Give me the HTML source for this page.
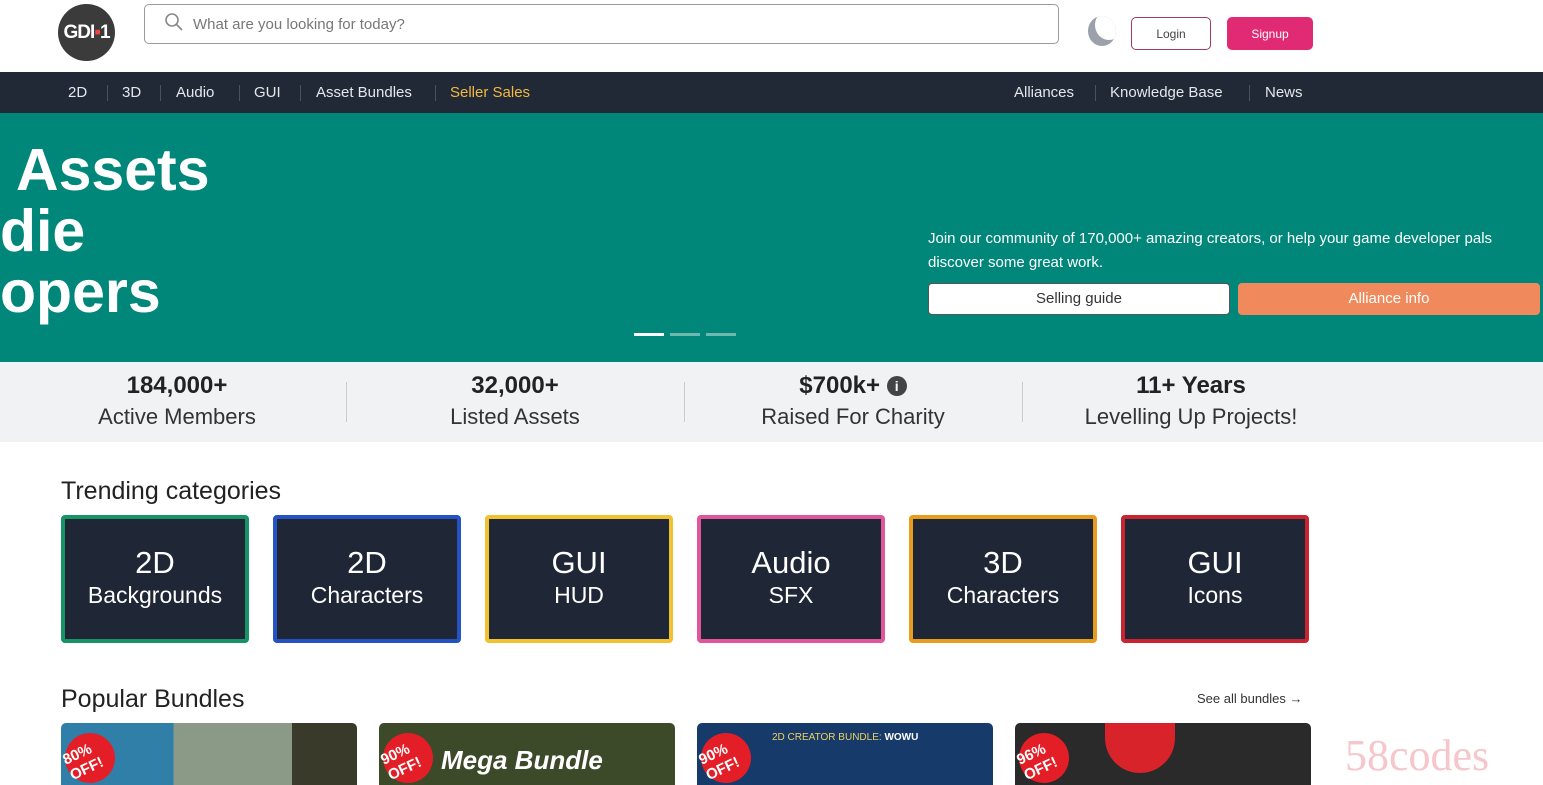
<!DOCTYPE html>
<html><head><meta charset="utf-8"><style>
*{margin:0;padding:0;box-sizing:border-box}
body{width:1543px;height:785px;overflow:hidden;font-family:"Liberation Sans",sans-serif;background:#fff;position:relative;color:#1f2937}
.abs{position:absolute}
.logo{left:58px;top:4px;width:57px;height:57px;border-radius:50%;background:#3b3b3b;color:#fff;font-weight:bold;font-size:19px;display:flex;align-items:center;justify-content:center;letter-spacing:-1px}
.search{left:144px;top:4px;width:915px;height:40px;border:1px solid #9a9a9a;border-radius:5px;color:#777;font-size:15px;padding:11px 0 0 48px}
.btn{top:17px;height:33px;border-radius:5px;font-size:12px;display:flex;align-items:center;justify-content:center}
.nav{left:0;top:72px;width:1543px;height:41px;background:#212836;color:#e5e7eb;font-size:15px}
.nav span{position:absolute;top:12px}
.sep{position:absolute;top:13px;width:1px;height:16px;background:#4a5161}
.hero{left:0;top:113px;width:1543px;height:249px;background:#00877a;color:#fff}
.big{font-weight:bold;font-size:59px;line-height:60px;position:absolute}
.stats{left:0;top:362px;width:1543px;height:80px;background:#f1f2f3}
.st{position:absolute;top:10px;width:338px;text-align:center}
.st b{display:block;font-size:24px;color:#222}
.st i{font-style:normal;display:block;font-size:22px;color:#333;margin-top:4px}
.vs{position:absolute;top:20px;width:1px;height:40px;background:#ccc}
.tile{position:absolute;top:515px;width:188px;height:128px;background:#1f2636;border:4px solid;border-radius:4px;color:#fff;text-align:center;padding-top:28px}
.tile b{display:block;font-weight:normal;font-size:31px;line-height:32px}
.tile i{display:block;font-style:normal;font-size:23px;margin-top:3px}
.bund{position:absolute;top:723px;width:296px;height:62px;border-radius:5px 5px 0 0;overflow:hidden}
.badge{position:absolute;left:4px;top:10px;width:50px;height:50px;border-radius:50%;background:#e41e26;color:#fff;font-weight:bold;font-size:15px;display:flex;align-items:center;justify-content:center;transform:rotate(-25deg)}
</style></head><body>
<div class="abs logo">GDI<span style="color:#e44">▪</span>1</div>
<div class="abs search">What are you looking for today?</div>
<svg class="abs" style="left:164px;top:12px" width="20" height="20" viewBox="0 0 20 20"><circle cx="8" cy="8" r="6" fill="none" stroke="#888" stroke-width="1.6"/><path d="M12.5 12.5L18 18" stroke="#888" stroke-width="1.6"/></svg>
<div class="abs" style="left:1088px;top:16px;width:28px;height:30px;border-radius:50%;overflow:hidden;background:#9ca0aa"><div style="position:absolute;left:7px;top:-6px;width:28px;height:30px;border-radius:50%;background:#fff"></div></div>
<div class="abs btn" style="left:1131px;width:80px;border:1px solid #a23a63;color:#444">Login</div>
<div class="abs btn" style="left:1227px;width:86px;background:#e02a74;color:#fff">Signup</div>
<div class="abs nav">
<span style="left:68px">2D</span><div class="sep" style="left:107px"></div>
<span style="left:122px">3D</span><div class="sep" style="left:160px"></div>
<span style="left:176px">Audio</span><div class="sep" style="left:239px"></div>
<span style="left:254px">GUI</span><div class="sep" style="left:300px"></div>
<span style="left:316px">Asset Bundles</span><div class="sep" style="left:435px"></div>
<span style="left:450px;color:#f4b942">Seller Sales</span>
<span style="left:1014px">Alliances</span><div class="sep" style="left:1095px"></div>
<span style="left:1110px">Knowledge Base</span><div class="sep" style="left:1249px"></div>
<span style="left:1265px">News</span>
</div>
<div class="abs hero">
<div class="big" style="left:16px;top:27px">Assets</div>
<div class="big" style="left:0;top:88px">die</div>
<div class="big" style="left:0;top:149px">opers</div>
<div class="abs" style="left:928px;top:114px;font-size:15px;line-height:24px;width:610px">Join our community of 170,000+ amazing creators, or help your game developer pals discover some great work.</div>
<div class="abs" style="left:928px;top:170px;width:302px;height:32px;background:#fff;border:1px solid #555;border-radius:4px;color:#333;font-size:15px;text-align:center;line-height:30px">Selling guide</div>
<div class="abs" style="left:1238px;top:170px;width:302px;height:32px;background:#f08a5d;border-radius:4px;color:#fff;font-size:15px;text-align:center;line-height:32px">Alliance info</div>
<div class="abs" style="left:634px;top:220px;width:30px;height:3px;background:#fff"></div>
<div class="abs" style="left:670px;top:220px;width:30px;height:3px;background:#6fb8b0"></div>
<div class="abs" style="left:706px;top:220px;width:30px;height:3px;background:#6fb8b0"></div>
</div>
<div class="abs stats">
<div class="st" style="left:8px"><b>184,000+</b><i>Active Members</i></div><div class="vs" style="left:346px"></div>
<div class="st" style="left:346px"><b>32,000+</b><i>Listed Assets</i></div><div class="vs" style="left:684px"></div>
<div class="st" style="left:684px"><b>$700k+ <span style="display:inline-block;width:20px;height:20px;border-radius:50%;background:#444;color:#fff;font-size:14px;line-height:20px;vertical-align:2px">i</span></b><i>Raised For Charity</i></div><div class="vs" style="left:1022px"></div>
<div class="st" style="left:1022px"><b>11+ Years</b><i>Levelling Up Projects!</i></div>
</div>
<div class="abs" style="left:61px;top:477px;font-size:25px;color:#222">Trending categories</div>
<div class="tile" style="left:61px;border-color:#169466"><b>2D</b><i>Backgrounds</i></div>
<div class="tile" style="left:273px;border-color:#2553c4"><b>2D</b><i>Characters</i></div>
<div class="tile" style="left:485px;border-color:#f2c12e"><b>GUI</b><i>HUD</i></div>
<div class="tile" style="left:697px;border-color:#e0559b"><b>Audio</b><i>SFX</i></div>
<div class="tile" style="left:909px;border-color:#e89c1c"><b>3D</b><i>Characters</i></div>
<div class="tile" style="left:1121px;border-color:#c9242f"><b>GUI</b><i>Icons</i></div>
<div class="abs" style="left:61px;top:685px;font-size:25px;color:#222">Popular Bundles</div>
<div class="abs" style="left:1197px;top:691px;font-size:13px;color:#333">See all bundles →</div>
<div class="bund" style="left:61px;background:linear-gradient(90deg,#2f7fa8 0 38%,#8a9a86 38% 78%,#3a3a2a 78%)"><div class="badge">80% OFF!</div></div>
<div class="bund" style="left:379px;background:#3c4a2a"><div class="badge">90% OFF!</div><div class="abs" style="left:62px;top:22px;color:#fff;font-style:italic;font-weight:bold;font-size:26px">Mega Bundle</div></div>
<div class="bund" style="left:697px;background:#163a6a"><div class="badge">90% OFF!</div><div class="abs" style="left:75px;top:9px;color:#f0d060;font-size:10px">2D CREATOR BUNDLE: <b style="color:#fff">WOWU</b></div></div>
<div class="bund" style="left:1015px;background:#2a2a2a"><div class="badge">96% OFF!</div><div class="abs" style="left:90px;top:0;width:70px;height:50px;border-radius:0 0 35px 35px;background:#d8232a"></div></div>
<div class="abs" style="left:1345px;top:730px;font-family:'Liberation Serif',serif;font-size:44px;color:#f5c6cb">58codes</div>
</body></html>
